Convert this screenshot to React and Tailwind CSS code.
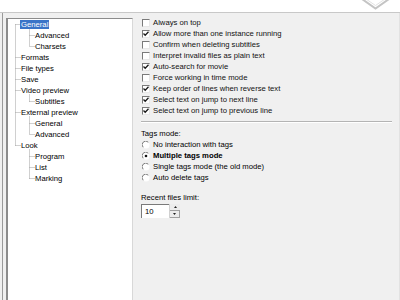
import React from "react";

const tree = [
  { label: "General", level: 0, selected: true },
  { label: "Advanced", level: 1 },
  { label: "Charsets", level: 1 },
  { label: "Formats", level: 0 },
  { label: "File types", level: 0 },
  { label: "Save", level: 0 },
  { label: "Video preview", level: 0 },
  { label: "Subtitles", level: 1 },
  { label: "External preview", level: 0 },
  { label: "General", level: 1 },
  { label: "Advanced", level: 1 },
  { label: "Look", level: 0 },
  { label: "Program", level: 1 },
  { label: "List", level: 1 },
  { label: "Marking", level: 1 },
];

const options = [
  ["Always on top", false],
  ["Allow more than one instance running", true],
  ["Confirm when deleting subtitles", false],
  ["Interpret invalid files as plain text", false],
  ["Auto-search for movie", true],
  ["Force working in time mode", false],
  ["Keep order of lines when reverse text", true],
  ["Select text on jump to next line", true],
  ["Select text on jump to previous line", true],
];

const tagModes = [
  ["No interaction with tags", false],
  ["Multiple tags mode", true],
  ["Single tags mode (the old mode)", false],
  ["Auto delete tags", false],
];

function TreeLines() {
  // dotted connector lines of the tree view, one row = 11px, first row centre at y=5.5
  const rowY = (i) => 5.5 + i * 11;
  const roots = [0, 3, 4, 5, 6, 8, 11];
  const groups = [
    { parent: 0, kids: [1, 2] },
    { parent: 6, kids: [7] },
    { parent: 8, kids: [9, 10] },
    { parent: 11, kids: [12, 13, 14] },
  ];
  const stroke = "#a0a0a0";
  return (
    <svg className="absolute left-0 top-0" width="60" height="180">
      <line x1="7.5" y1={rowY(0)} x2="7.5" y2={rowY(11)} stroke={stroke} strokeDasharray="1 1" />
      {roots.map((r) => (
        <line key={r} x1="7.5" y1={rowY(r)} x2="13" y2={rowY(r)} stroke={stroke} strokeDasharray="1 1" />
      ))}
      {groups.map((g) => (
        <g key={g.parent}>
          <line x1="21.5" y1={rowY(g.parent) + 4} x2="21.5" y2={rowY(g.kids[g.kids.length - 1])} stroke={stroke} strokeDasharray="1 1" />
          {g.kids.map((k) => (
            <line key={k} x1="21.5" y1={rowY(k)} x2="27" y2={rowY(k)} stroke={stroke} strokeDasharray="1 1" />
          ))}
        </g>
      ))}
    </svg>
  );
}

function Checkbox({ checked }) {
  return (
    <div className="w-[8px] h-[8px] bg-white border-t border-l border-t-[#7a7a7a] border-l-[#7a7a7a] border-b border-r border-b-[#e8e8e8] border-r-[#e8e8e8] flex items-center justify-center shrink-0">
      {checked && (
        <svg width="6" height="6" viewBox="0 0 6 6">
          <path d="M0.5 2.5 L2.2 4.3 L5.5 0.8" stroke="#1a1a1a" strokeWidth="1.3" fill="none" />
        </svg>
      )}
    </div>
  );
}

function Radio({ checked }) {
  return (
    <svg width="8" height="8" viewBox="0 0 8 8" className="shrink-0">
      <circle cx="4" cy="4" r="3.5" fill="#fff" />
      <path d="M1.2 6.3 A3.5 3.5 0 0 1 6.3 1.2" stroke="#7a7a7a" strokeWidth="1" fill="none" />
      {checked && <circle cx="4" cy="4" r="1.3" fill="#111" />}
    </svg>
  );
}

export default function App() {
  return (
    <div
      className="w-[400px] h-[300px] overflow-hidden bg-[#f0f0f0] flex flex-col text-[7.7px] text-black leading-none"
      style={{ fontFamily: '"Liberation Sans", Arial, sans-serif' }}
    >
      {/* header band with logo */}
      <div className="h-[13px] shrink-0 bg-white border-b border-[#c8c8c8] flex justify-end pr-[9px]">
        <svg width="30" height="12" viewBox="0 0 30 12">
          <path d="M1 -1 L14.5 8.5 L28 -1" stroke="#c4c4c4" strokeWidth="2" fill="none" />
          <path d="M5 -1 L14.5 5.5 L24 -1" stroke="#e2e2e2" strokeWidth="1" fill="none" />
        </svg>
      </div>

      <div className="flex flex-1 min-h-0">
        {/* tree view */}
        <div className="flex pl-[2px] shrink-0">
          <div className="border-l border-[#9a9a9a] pl-[3px] pt-[5px]">
            <div className="relative w-[127px] h-[300px] bg-white border-t-[1px] border-l-[2px] border-r border-r-[#d8d8d8] border-[#8c8c8c]">
              <TreeLines />
              <div className="relative flex flex-col">
                {tree.map((item, i) => (
                  <div key={i} className="h-[11px] flex items-center">
                    <span
                      className={
                        (item.level === 0 ? "ml-[12px] " : "ml-[26px] ") +
                        (item.selected ? "bg-[#3a74c8] text-white px-[1px] h-[9px] flex items-center" : "px-[1px]")
                      }
                    >
                      {item.label}
                    </span>
                  </div>
                ))}
              </div>
            </div>
          </div>
        </div>

        {/* options panel */}
        <div className="flex-1 flex flex-col pl-[8px] pr-[7px] pt-[4px] border-r border-[#e2e2e2]">
          <div className="flex flex-col">
            {options.map(([label, checked], i) => (
              <div key={i} className="h-[11px] flex items-center gap-[3px] pl-[1px]">
                <Checkbox checked={checked} />
                <span className="text-[#111]">{label}</span>
              </div>
            ))}
          </div>

          <div className="mt-[5px] border-t border-[#b4b4b4] border-b border-b-white" />

          <div className="mt-[5px] h-[11px] flex items-center">Tags mode:</div>
          <div className="flex flex-col">
            {tagModes.map(([label, checked], i) => (
              <div key={i} className="h-[11px] flex items-center gap-[3px] pl-[1px]">
                <Radio checked={checked} />
                <span className={checked ? "font-bold" : ""}>{label}</span>
              </div>
            ))}
          </div>

          <div className="mt-[9px] h-[11px] flex items-center">Recent files limit:</div>
          <div className="mt-[1px] flex w-[39px] h-[14px]">
            <div className="flex-1 bg-white border-t border-l border-[#7a7a7a] flex items-center pl-[3px]">10</div>
            <div className="w-[11px] flex flex-col border-l border-[#d0d0d0]">
              <div className="flex-1 bg-[#ececec] border-b border-[#a0a0a0] flex items-center justify-center">
                <svg width="3" height="2" viewBox="0 0 3 2"><path d="M1.5 0 L3 2 L0 2 Z" fill="#222" /></svg>
              </div>
              <div className="flex-1 bg-[#ececec] border-b border-r border-[#a0a0a0] flex items-center justify-center">
                <svg width="3" height="2" viewBox="0 0 3 2"><path d="M0 0 L3 0 L1.5 2 Z" fill="#222" /></svg>
              </div>
            </div>
          </div>
        </div>
      </div>
    </div>
  );
}
